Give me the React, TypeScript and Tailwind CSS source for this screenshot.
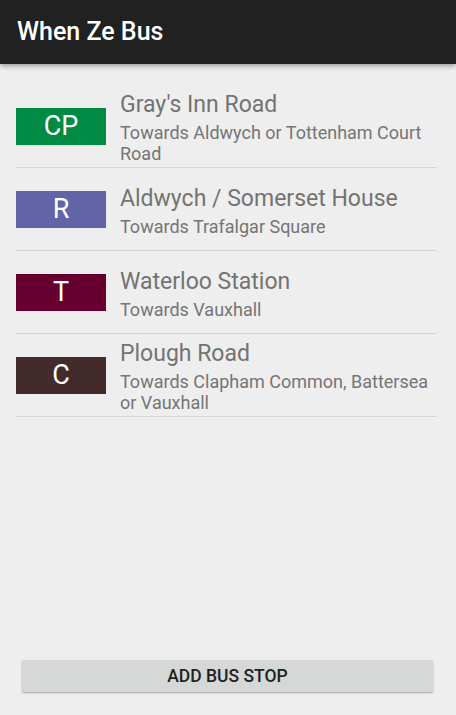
const stops = [
  { code: "CP", color: "#008b45", name: "Gray's Inn Road", towards: "Towards Aldwych or Tottenham Court Road" },
  { code: "R", color: "#6264a7", name: "Aldwych / Somerset House", towards: "Towards Trafalgar Square" },
  { code: "T", color: "#660030", name: "Waterloo Station", towards: "Towards Vauxhall" },
  { code: "C", color: "#432b2b", name: "Plough Road", towards: "Towards Clapham Common, Battersea or Vauxhall" },
];

export default function App() {
  return (
    <div
      className="flex h-[715px] w-[456px] flex-col overflow-hidden bg-[#eeeeee]"
      style={{ fontFamily: "Roboto, 'Noto Sans', sans-serif" }}
    >
      {/* Toolbar */}
      <header className="relative z-10 flex h-[64px] shrink-0 items-center bg-[#212121] pl-[17px] shadow-[0_2px_5px_rgba(0,0,0,0.35)]">
        <h1 className="text-[25px] font-medium text-white">When Ze Bus</h1>
      </header>

      {/* Stop list */}
      <ul className="flex-1 px-[16px] pt-[21px]">
        {stops.map((stop) => (
          <li
            key={stop.code}
            className="mr-[3px] flex h-[83px] items-center border-b border-[#d6d6d6]"
          >
            <div
              className="flex h-[37px] w-[90px] shrink-0 items-center justify-center text-[27px] leading-none text-white"
              style={{ backgroundColor: stop.color }}
            >
              {stop.code}
            </div>
            <div className="ml-[14px] min-w-0 flex-1 pt-[3px]">
              <div className="text-[23px] leading-[28px] text-[#737373]">{stop.name}</div>
              <div className="mt-[3px] text-[18px] leading-[21px] text-[#757575]">{stop.towards}</div>
            </div>
          </li>
        ))}
      </ul>

      {/* Add button */}
      <div className="shrink-0 px-[22px] pb-[23px] pr-[23px]">
        <button className="flex h-[32px] w-full items-center justify-center rounded-[2px] bg-[#d6d7d7] text-[17.5px] font-medium text-[#212121] shadow-[0_1px_2px_rgba(0,0,0,0.3)]">
          ADD BUS STOP
        </button>
      </div>
    </div>
  );
}
